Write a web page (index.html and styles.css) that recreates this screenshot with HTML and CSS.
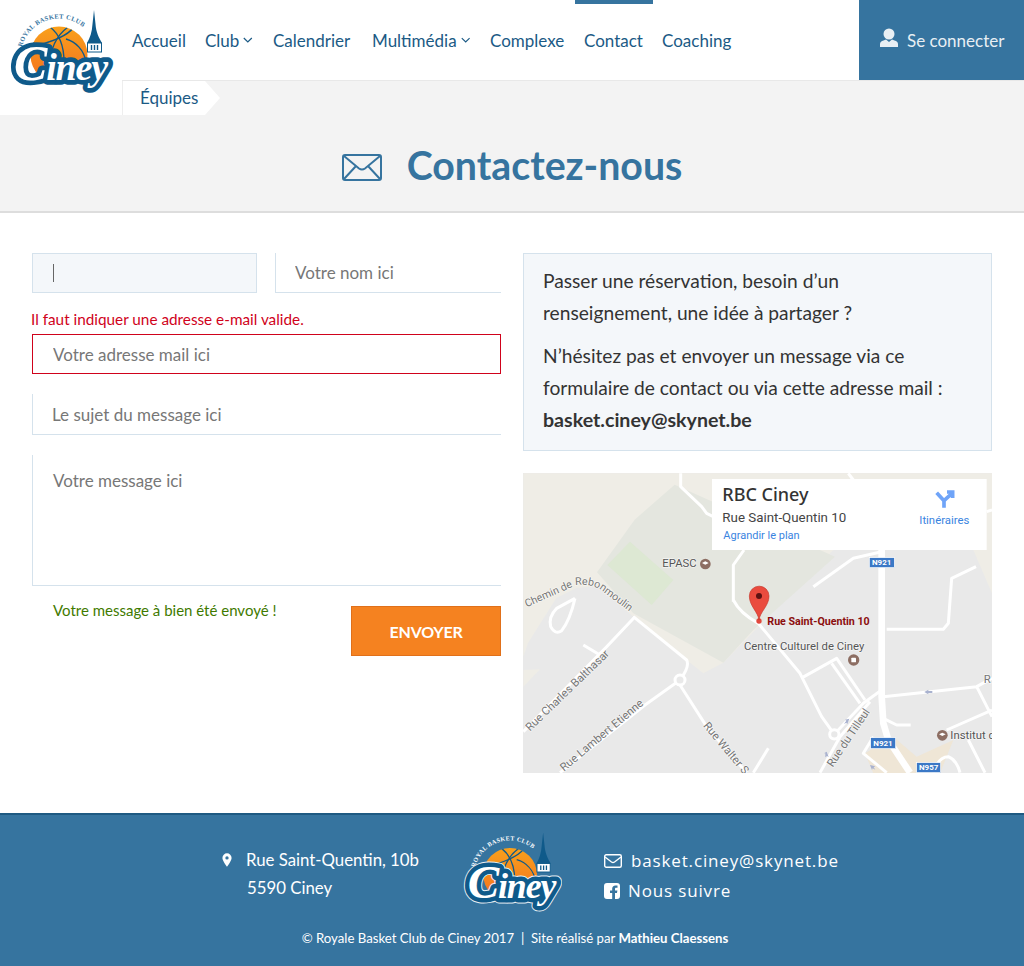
FILE: index.html
```html
<!DOCTYPE html>
<html lang="fr">
<head>
    <meta charset="UTF-8">
    <meta name="viewport" content="width=device-width, initial-scale=1.0">
    <title>Contactez-nous - RBC Ciney</title>
    <link rel="stylesheet" href="styles.css">
</head>
<body>
    <!-- logo, reused in the footer -->
    <svg class="defs" width="0" height="0">
        <defs>
            <path id="logo-arc" d="M22 47 A38 38 0 0 1 93 40"/>
            <clipPath id="ball-clip"><circle cx="59" cy="55" r="28.500"/></clipPath>
            <linearGradient id="ball-grad" x1="0" y1="0" x2="0" y2="1">
                <stop offset="0" stop-color="#f9a01b"/>
                <stop offset="1" stop-color="#f26f21"/>
            </linearGradient>
            <symbol id="logo" viewBox="0 0 122 100">
                <circle cx="59" cy="55" r="28.500" fill="url(#ball-grad)"/>
                <g clip-path="url(#ball-clip)" fill="none" stroke="#0f5a8a" stroke-width="1.400">
                    <path d="M30 47 C44 44 66 38 74 27"/>
                    <path d="M50 27 C58 33 64 44 64 62"/>
                    <path d="M68 27 C56 36 50 48 50 66"/>
                    <path d="M32 42 C40 46 44 54 45 62"/>
                    <path d="M66 39 C76 42 84 50 86 62"/>
                </g>
                <text class="logo-arc-text"><textPath href="#logo-arc" textLength="76">ROYAL BASKET CLUB</textPath></text>
                <path d="M94 10 L95.500 24 C96 32 99 38 102 43 L87 43 C90 38 92 32 92.500 24 Z" fill="#0f5a8a"/>
                <rect x="87.500" y="43" width="14" height="9" fill="#fff" stroke="#0f5a8a" stroke-width="1"/>
                <path d="M91.500 45v5M94.500 45v5M97.500 45v5" stroke="#0f5a8a" stroke-width="1.400"/>
                <text class="logo-name logo-name-halo" x="14" y="80" textLength="94"><tspan class="logo-cap">C</tspan>iney</text>
                <text class="logo-name logo-name-back" x="14" y="80" textLength="94"><tspan class="logo-cap">C</tspan>iney</text>
                <text class="logo-name logo-name-top" x="14" y="80" textLength="94"><tspan class="logo-cap">C</tspan>iney</text>
            </symbol>
        </defs>
    </svg>

    <header class="site-header">
        <a class="logo" href="#"><svg width="122" height="100"><use href="#logo"/></svg></a>
        <div class="header-right">
            <div class="top-bar">
                <nav class="main-nav">
                    <a class="nav-item nav-accueil" href="#">Accueil</a>
                    <a class="nav-item nav-club" href="#">Club <svg class="chevron" viewBox="0 0 12 8"><path d="M1 1.500l5 5 5-5"/></svg></a>
                    <a class="nav-item nav-calendrier" href="#">Calendrier</a>
                    <a class="nav-item nav-multimedia" href="#">Multimédia <svg class="chevron" viewBox="0 0 12 8"><path d="M1 1.500l5 5 5-5"/></svg></a>
                    <a class="nav-item nav-complexe" href="#">Complexe</a>
                    <a class="nav-item nav-contact active" href="#">Contact</a>
                    <a class="nav-item nav-coaching" href="#">Coaching</a>
                </nav>
                <a class="login" href="#">
                    <svg class="login-icon" viewBox="0 0 18 20"><circle cx="9" cy="6" r="5.500"/><path d="M0 19v-3c0-2 1.500-3 3.500-3.500L6 11.500l3 2.500 3-2.500 2.500 1C16.500 13 18 14 18 16v3z"/></svg>
                    Se connecter
                </a>
            </div>
            <div class="sub-bar">
                <a class="sub-tab" href="#">Équipes</a>
            </div>
        </div>
    </header>

    <section class="hero">
        <svg class="hero-icon" viewBox="0 0 40 27"><rect x="1" y="1" width="38" height="25" rx="2"/><path d="M2 2l15 12.500q3 2 6 0L38 2M2 25l12-13M38 25L26 12"/></svg>
        <h1>Contactez-nous</h1>
    </section>

    <main class="content">
        <form class="contact-form">
            <div class="form-row">
                <div class="field field-filled"><span class="caret"></span></div>
                <input class="field field-open" type="text" placeholder="Votre nom ici">
            </div>
            <div class="field-group">
                <p class="field-error">Il faut indiquer une adresse e-mail valide.</p>
                <input class="field field-invalid" type="text" placeholder="Votre adresse mail ici">
            </div>
            <input class="field field-open field-subject" type="text" placeholder="Le sujet du message ici">
            <textarea class="field field-open field-message" placeholder="Votre message ici"></textarea>
            <div class="form-foot">
                <p class="form-success">Votre message à bien été envoyé !</p>
                <button class="send-btn" type="button">ENVOYER</button>
            </div>
        </form>

        <div class="side">
            <div class="info-box">
                <p>Passer une réservation, besoin d’un renseignement, une idée à partager ?</p>
                <p>N’hésitez pas et envoyer un message via ce formulaire de contact ou via cette adresse mail : <strong>basket.ciney@skynet.be</strong></p>
            </div>
            <svg class="map" width="469" height="300" viewBox="0 0 469 300">
                <g transform="translate(-3 -3) scale(0.33333)">
                    <rect x="0" y="0" width="1440" height="920" fill="#e9e9e9"/>
                    <path d="M10 10H1416V370L1360 240H940L610 578 550 610 500 570 340 440 234 349 169 354 109 384 24 519 10 560Z" fill="#efede6"/>
                    <path d="M10 600L60 598 10 650Z" fill="#efede6"/>
                    <path d="M464 44L945 260 700 480 610 578 340 430 231 307 344 149Z" fill="#e4e6df"/>
                    <path d="M330 215L460 330 395 405 262 285Z" fill="#dde8d3"/>
                    <path d="M1035 850L1120 800 1190 860 1300 810 1260 910H1060Z" fill="#efe6d6"/>

                    <g class="roads">
                        <path d="M340 440L500 570Q510 590 480 630L375 705 120 908"/>
                        <path d="M345 440L260 530 10 785"/>
                        <path d="M165 385L110 415Q85 440 92 470 105 495 125 482 150 450 165 385"/>
                        <path d="M480 645L560 770 680 908"/>
                        <path d="M640 395V285L672 240M640 390Q660 430 715 460L840 610 905 740 943 793"/>
                        <path d="M848 622L950 565 1035 690M935 580L1020 700"/>
                        <path d="M1090 680L1370 650 1416 740M1370 650L1416 625"/>
                        <path d="M943 793L1030 700 1085 660M900 908L960 800 1050 695"/>
                        <path d="M880 350L1000 265 1085 245"/>
                        <path d="M1100 478H1270L1285 460 1295 325 1368 290"/>
                        <path d="M482 10V50L545 110 560 130 600 150"/>
                        <path d="M1090 745L1130 765H1172"/>
                        <path d="M190 525L240 555"/>
                        <path d="M700 908L745 835"/>
                        <path d="M1060 800L1030 850 1100 908"/>
                        <path d="M1345 810L1395 908M1280 780L1416 720"/>
                        <path d="M985 10L1000 30M1400 125L1416 120"/>
                        <path class="road-main" d="M1085 240V680L1090 760 1105 810 1170 908"/>
                        <path d="M1240 908Q1255 860 1285 860 1310 870 1320 908"/>
                        <circle cx="480" cy="630" r="15"/>
                        <circle cx="943" cy="793" r="14"/>
                    </g>

                    <g class="arrows">
                        <path d="M1213 666l12-7v4h12v6h-12v4z"/>
                        <path d="M988 746l-6 16-3-4-7 4 7-10-4-3z"/>
                        <path d="M920 845l6 16-5-3-5 4 0-12-4 0z"/>
                        <path d="M1050 885l16 4-5 3 5 7-8-4-2 5z"/>
                    </g>

                    <rect class="shield" x="1048" y="263" width="75" height="30"/>
                    <text class="shield-text" x="1085" y="286">N921</text>
                    <rect class="shield" x="1052" y="803" width="75" height="33"/>
                    <text class="shield-text" x="1089" y="827">N921</text>
                    <rect class="shield" x="1190" y="878" width="72" height="30"/>
                    <text class="shield-text" x="1226" y="901">N957</text>

                    <path id="chemin-path" d="M20 412L170 345Q225 340 255 370L360 448" fill="none"/>
                    <text class="map-label map-label-curve"><textPath href="#chemin-path">Chemin de Rebonmoulin</textPath></text>
                    <text class="map-label" transform="translate(30 785) rotate(-44)">Rue Charles Balthasar</text>
                    <text class="map-label" transform="translate(132 905) rotate(-40)">Rue Lambert Etienne</text>
                    <text class="map-label" transform="translate(548 768) rotate(50)">Rue Walter S</text>
                    <text class="map-label" transform="translate(938 893) rotate(-56)">Rue du Tilleul</text>
                    <text class="map-label" x="1391" y="640">R</text>
                    <text class="map-label map-label-top" x="427" y="291">EPASC</text>
                    <text class="map-label map-label-top" x="672" y="541">Centre Culturel de Ciney</text>
                    <text class="map-label map-label-top" x="1291" y="808">Institut d</text>
                    <text class="map-place" x="742" y="465">Rue Saint-Quentin 10</text>

                    <circle class="poi" cx="556" cy="282" r="16"/>
                    <path d="M546 279l10-5 10 5-10 5z" fill="#fff"/>
                    <circle class="poi" cx="1001" cy="570" r="17"/>
                    <rect x="994" y="563" width="14" height="14" rx="2" fill="#fff"/>
                    <circle class="poi" cx="1267" cy="796" r="16"/>
                    <path d="M1257 793l10-5 10 5-10 5z" fill="#fff"/>

                    <circle cx="717" cy="453" r="8" fill="#e2483d"/>
                    <path d="M717 450C714 425 688 408 688 378A29.500 29.500 0 0 1 747 378C747 408 720 425 717 450Z" fill="#ea4b3e" stroke="#c5362b" stroke-width="2"/>
                    <circle cx="717" cy="378" r="9" fill="#5c1212"/>

                    <rect class="map-card" x="576" y="27" width="824" height="213"/>
                    <text class="card-title" x="607" y="92">RBC Ciney</text>
                    <text class="card-address" x="607" y="155">Rue Saint-Quentin 10</text>
                    <text class="card-link" x="610" y="206">Agrandir le plan</text>
                    <text class="card-link card-directions" x="1198" y="161">Itinéraires</text>
                    <path d="M1272 113V92L1250 68M1272 92L1296 70M1281 66H1298V84" fill="none" stroke="#6fa4f8" stroke-width="11"/>
                </g>
            </svg>
        </div>
    </main>

    <footer class="site-footer">
        <div class="footer-top">
            <div class="footer-address">
                <p class="address-line"><svg class="pin-icon" viewBox="0 0 12 16"><path fill-rule="evenodd" d="M6 0a5.500 5.500 0 0 1 5.500 5.500C11.500 9 6 16 6 16S.5 9 .5 5.500A5.500 5.500 0 0 1 6 0zm0 3.500a2 2 0 1 0 0 4 2 2 0 0 0 0-4z"/></svg>Rue Saint-Quentin, 10b</p>
                <p class="address-city">5590 Ciney</p>
            </div>
            <svg class="footer-logo" width="100" height="82" viewBox="8 9 106 86"><use href="#logo" width="122" height="100"/></svg>
            <div class="footer-links">
                <a class="footer-link" href="#"><svg class="mail-icon" viewBox="0 0 18 14"><rect x=".7" y=".7" width="16.600" height="12.600" rx="1.500"/><path d="M1 3l6.500 5q1.500 1 3 0L17 3"/></svg>basket.ciney@skynet.be</a>
                <a class="footer-link footer-link-fb" href="#"><svg class="fb-icon" viewBox="0 0 16 16"><path d="M3 0h10a3 3 0 0 1 3 3v10a3 3 0 0 1-3 3h-2V10h2l.4-2.500H11V6c0-.8.3-1.200 1.200-1.200h1.300V2.500H11.500C9.300 2.500 8.200 3.800 8.200 5.800v1.700H6V10h2.200v6H3a3 3 0 0 1-3-3V3a3 3 0 0 1 3-3z"/></svg>Nous suivre</a>
            </div>
        </div>
        <p class="copyright">© Royale Basket Club de Ciney 2017 &nbsp;|&nbsp; Site réalisé par <strong>Mathieu Claessens</strong></p>
    </footer>
</body>
</html>
```

FILE: styles.css
```css
* {
    box-sizing: border-box;
}
body {
    margin: 0;
    font-family: Lato, "Noto Sans", sans-serif;
    font-size: 17px;
    color: #333;
    background: #fff;
    --logo-arc: #36749f;
    --logo-halo: transparent;
}
a {
    color: inherit;
    text-decoration: none;
}
p {
    margin: 0;
}
.defs {
    display: block;
    height: 0;
}

/* header */
.site-header {
    display: flex;
    height: 115px;
}
.logo {
    flex: 0 0 122px;
    height: 115px;
    background: #fff;
}
.logo svg {
    display: block;
}
.header-right {
    flex: 1;
    display: flex;
    flex-direction: column;
}
.top-bar {
    display: flex;
    justify-content: space-between;
    height: 80px;
}
.main-nav {
    display: flex;
}
.nav-item {
    display: flex;
    align-items: center;
    gap: 4px;
    height: 80px;
    padding: 0 10px 4px;
    border-top: 4px solid transparent;
    color: #1b5a85;
    white-space: nowrap;
}
.nav-item.active {
    border-top-color: #36749f;
}
.nav-accueil { width: 73px; }
.nav-club { width: 68px; }
.nav-calendrier { width: 99px; }
.nav-multimedia { width: 118px; }
.nav-complexe { width: 95px; }
.nav-contact { width: 78px; padding-left: 9px; }
.nav-coaching { width: 90px; padding-left: 9px; }
.chevron {
    width: 11px;
    height: 8px;
    fill: none;
    stroke: #1b5a85;
    stroke-width: 1.500;
}
.login {
    display: flex;
    align-items: center;
    gap: 9px;
    width: 165px;
    padding-left: 21px;
    background: #36749f;
    color: #e8eff4;
}
.login-icon {
    width: 18px;
    height: 20px;
    margin-top: -5px;
    fill: #e8eff4;
}
.sub-bar {
    height: 35px;
    background: #f3f3f3;
    border-top: 1px solid #e8e8e8;
}
.sub-tab {
    display: flex;
    align-items: center;
    width: 98px;
    height: 34px;
    padding: 0 0 2px 17px;
    background: #fff;
    border-left: 1px solid #eee;
    color: #1b5a85;
    clip-path: polygon(0 0, 83px 0, 100% 50%, 83px 100%, 0 100%);
}

/* title band */
.hero {
    display: flex;
    align-items: center;
    justify-content: center;
    gap: 25px;
    height: 98px;
    padding-top: 2px;
    background: #f3f3f3;
    border-bottom: 2px solid #ddd;
}
.hero-icon {
    width: 40px;
    height: 27px;
    margin-top: 6px;
    fill: none;
    stroke: #36749f;
    stroke-width: 2;
}
.hero h1 {
    margin: 0;
    font-size: 39.300px;
    font-weight: 700;
    color: #36749f;
}

/* form + info */
.content {
    display: grid;
    grid-template-columns: 469px 469px;
    gap: 22px;
    padding: 40px 32px;
}
.contact-form {
    display: flex;
    flex-direction: column;
    gap: 20px;
    height: 520px;
}
.form-row {
    display: flex;
    gap: 18px;
}
.form-row .field-filled {
    flex: 0 0 225px;
}
.field-group {
    margin-top: -4px;
}
.field {
    display: block;
    width: 100%;
    height: 40px;
    padding: 0 20px;
    border: 0 solid #d5e2ec;
    border-radius: 0;
    outline: none;
    background: #fff;
    font-family: inherit;
    font-size: 17px;
    color: #666;
}
.field::placeholder {
    color: #777;
    opacity: 1;
}
.field-filled {
    display: flex;
    align-items: center;
    background: #f4f7fa;
    border-width: 1px;
}
.caret {
    width: 1px;
    height: 18px;
    background: #666;
}
.field-open {
    padding: 0 19px;
    border-left-width: 1px;
    border-bottom-width: 1px;
}
.field-invalid {
    border: 1px solid #d0021b;
}
.field-subject {
    height: 41px;
}
.field-message {
    height: 131px;
    padding: 15px 20px 0;
    resize: none;
}
.field-error {
    margin: 0 0 5px -1px;
    font-size: 15.300px;
    line-height: 20px;
    color: #d0021b;
}
.form-foot {
    display: flex;
    justify-content: space-between;
    align-items: flex-start;
    padding-left: 21px;
}
.form-success {
    margin-top: -6px;
    font-size: 15px;
    line-height: 20px;
    color: #3f7a00;
}
.send-btn {
    width: 150px;
    height: 50px;
    border: 1px solid #e0701a;
    background: #f58220;
    font-family: inherit;
    font-size: 16px;
    font-weight: 700;
    letter-spacing: -.2px;
    color: #fff;
}
.side {
    display: flex;
    flex-direction: column;
    gap: 22px;
}
.info-box {
    height: 198px;
    padding: 11px 19px;
    border: 1px solid #d5e2ec;
    background: #f4f7fa;
    font-size: 19.200px;
    line-height: 32px;
}
.info-box p + p {
    margin-top: 11px;
}
.info-box strong {
    font-size: 19.600px;
    font-weight: 700;
}

/* map */
.map {
    display: block;
    font-family: Roboto, sans-serif;
}
.roads path,
.roads circle {
    fill: none;
    stroke: #fff;
    stroke-width: 9;
    stroke-linejoin: round;
}
.roads circle {
    fill: #e9e9e9;
}
.roads .road-main {
    stroke-width: 20;
}
.arrows path {
    fill: #a9b2cf;
}
.shield {
    fill: #3b78c6;
    stroke: #fff;
    stroke-width: 2;
}
.shield-text {
    font-size: 24px;
    font-weight: 700;
    fill: #fff;
    text-anchor: middle;
}
.map-label {
    font-size: 34px;
    fill: #777;
    paint-order: stroke;
    stroke: rgba(255, 255, 255, .6);
    stroke-width: 4px;
}
.map-label-curve {
    font-size: 32px;
}
.map-label-top {
    fill: #555;
}
.map-place {
    font-size: 32px;
    font-weight: 700;
    fill: #8b0d0d;
}
.poi {
    fill: #8d6e63;
}
.map-card {
    fill: #fff;
}
.card-title {
    font-family: "Noto Sans", sans-serif;
    font-size: 54px;
    font-weight: 500;
    fill: #333;
}
.card-address {
    font-size: 40px;
    fill: #444;
}
.card-link {
    font-size: 33px;
    fill: #3a84df;
}
.card-directions {
    font-size: 34px;
}

/* logo text */
.logo-arc-text {
    font-family: "Liberation Serif", serif;
    font-size: 6.500px;
    font-weight: 700;
    fill: var(--logo-arc);
}
.logo-name {
    font-family: "Liberation Serif", serif;
    font-size: 38px;
    font-style: italic;
    font-weight: 700;
    stroke-linejoin: round;
}
.logo-cap {
    font-size: 50px;
}
.logo-name-halo { fill: none; stroke: var(--logo-halo); stroke-width: 11.500px; }
.logo-name-back { fill: #0f5a8a; stroke: #0f5a8a; stroke-width: 9.500px; }
.logo-name-top { fill: #fff; }

/* footer */
.site-footer {
    height: 153px;
    padding-top: 18px;
    background: #36749f;
    border-top: 2px solid #1f5a82;
    color: #fff;
    --logo-arc: #fff;
    --logo-halo: #e8eff4;
}
.footer-top {
    display: grid;
    grid-template-columns: 1fr auto 1fr;
    gap: 43px;
}
.footer-address {
    justify-self: end;
    width: 198px;
    padding-top: 13px;
    line-height: 28px;
    font-size: 16.800px;
    white-space: nowrap;
}
.address-line {
    display: flex;
    align-items: center;
    gap: 14px;
}
.pin-icon {
    flex: none;
    width: 10px;
    height: 14px;
    fill: #fff;
}
.address-city {
    padding-left: 25px;
}
.footer-logo {
    display: block;
    margin: -2px -1px 0;
}
.footer-links {
    display: flex;
    flex-direction: column;
    padding-top: 13px;
    line-height: 30px;
    font-family: "Open Sans", sans-serif;
    font-size: 17px;
    letter-spacing: .85px;
    white-space: nowrap;
}
.footer-link {
    display: flex;
    align-items: center;
    gap: 9px;
}
.footer-link-fb {
    gap: 8px;
}
.mail-icon {
    flex: none;
    width: 18px;
    height: 14px;
    fill: none;
    stroke: #fff;
    stroke-width: 1.400;
}
.fb-icon {
    flex: none;
    width: 16px;
    height: 16px;
    fill: #fff;
}
.copyright {
    margin-top: 17px;
    font-size: 13.200px;
    text-align: center;
    padding-left: 6px;
}
.copyright strong {
    font-weight: 700;
}
```
